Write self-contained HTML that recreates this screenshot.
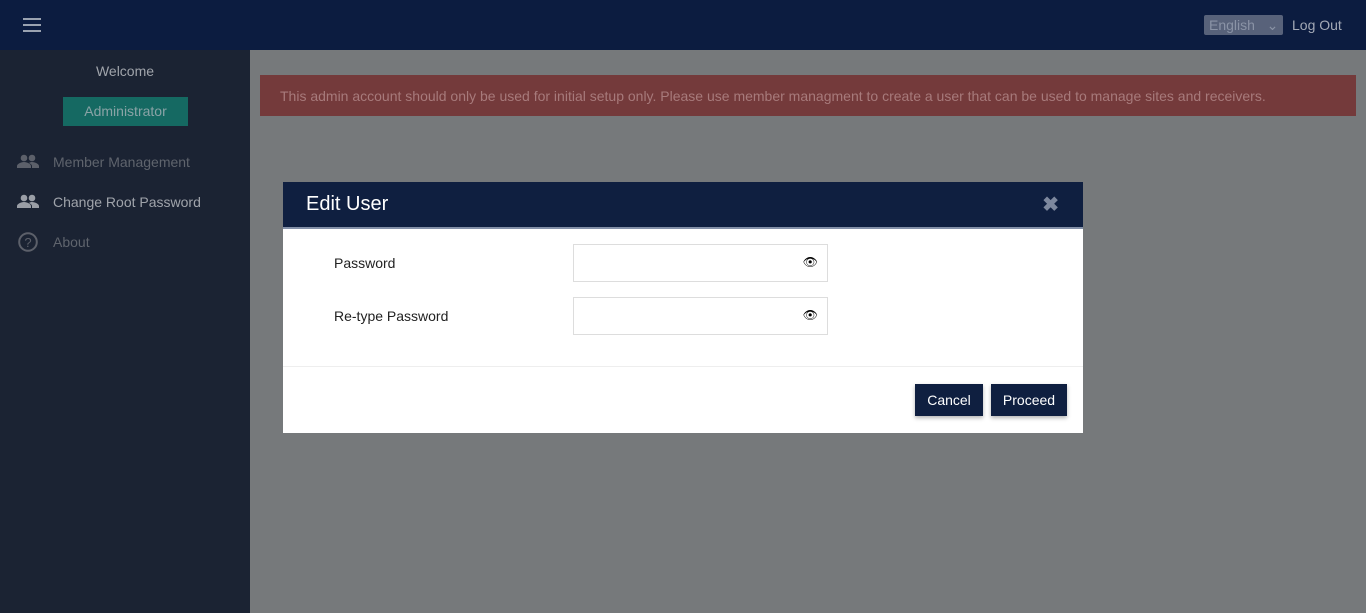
<!DOCTYPE html>
<html><head><style>
*{box-sizing:border-box;margin:0;padding:0}
body{width:1366px;height:613px;overflow:hidden;background:#76797b;font-family:"Liberation Sans",sans-serif;position:relative}
.top{position:absolute;left:0;top:0;width:1366px;height:50px;background:#0c1c40}
.ham{position:absolute;left:23px;top:18px;width:18px}
.ham i{display:block;height:2px;background:#9aa2b0;margin-bottom:4px}
.sel{position:absolute;left:1204px;top:15px;width:79px;height:20px;background:#58627a;border-radius:2px;color:#8a93a6;font-size:14px;padding:2px 0 0 5px}
.lo{position:absolute;left:1292px;top:17px;color:#a3a9b6;font-size:14px}
.side{position:absolute;left:0;top:50px;width:250px;height:563px;background:#1b2333}
.wel{position:absolute;left:0;width:250px;top:13px;text-align:center;color:#a0a4ab;font-size:14px}
.adm{position:absolute;left:63px;top:47px;width:125px;height:29px;background:#156962;color:#8aa3a6;font-size:14px;text-align:center;line-height:29px}
.it{position:absolute;left:53px;font-size:14px}
.alert{position:absolute;left:260px;top:75px;width:1096px;height:41px;background:#743a3b;color:#a77a7b;font-size:14px;padding:13px 20px}
.modal{position:absolute;left:283px;top:182px;width:800px;height:251px;background:#fff}
.mh{height:47px;background:#0f1f40;border-bottom:2px solid #8390a8;color:#fff;font-size:20px;padding:11px 23px}
.x{position:absolute;right:24px;top:10px;color:#7d889e;font-size:20px;font-weight:bold}
.lbl{position:absolute;left:51px;font-size:14px;color:#222}
.inp{position:absolute;left:290px;width:255px;height:38px;border:1px solid #ddd}
.eye{position:absolute;right:9px;top:10px;font-size:12px}
.ft{position:absolute;left:0;top:184px;width:800px;border-top:1px solid #eee}
.btn{position:absolute;top:202px;height:32px;background:#0f1f40;color:#fff;font-size:14px;line-height:32px;text-align:center;box-shadow:0 2px 4px rgba(0,0,0,.3)}
</style></head><body>
<div class="top"><div class="ham"><i></i><i></i><i></i></div><div class="sel">English&nbsp;&nbsp;&nbsp;⌄</div><div class="lo">Log Out</div></div>
<div class="side">
<div class="wel">Welcome</div>
<div class="adm">Administrator</div>
<svg style="position:absolute;left:17px;top:104px" width="22" height="14" viewBox="0 0 22 14"><g fill="#5c606a"><circle cx="7" cy="4" r="3.3"/><circle cx="15" cy="4" r="3.3"/><path d="M0 14v-2c0-2 4-4 7-4s7 2 7 4v2zM12 9c1-.8 2-1 3-1 3 0 7 2 7 4v2h-7v-2c0-1-1-2-3-3z"/></g></svg>
<div class="it" style="top:104px;color:#5f646d">Member Management</div>
<svg style="position:absolute;left:17px;top:144px" width="22" height="14" viewBox="0 0 22 14"><g fill="#9a9ea6"><circle cx="7" cy="4" r="3.3"/><circle cx="15" cy="4" r="3.3"/><path d="M0 14v-2c0-2 4-4 7-4s7 2 7 4v2zM12 9c1-.8 2-1 3-1 3 0 7 2 7 4v2h-7v-2c0-1-1-2-3-3z"/></g></svg>
<div class="it" style="top:144px;color:#a0a4ab">Change Root Password</div>
<svg style="position:absolute;left:18px;top:182px" width="20" height="20" viewBox="0 0 20 20"><circle cx="10" cy="10" r="8.8" fill="none" stroke="#5c606a" stroke-width="2"/><text x="10" y="15" text-anchor="middle" font-size="13" font-family="Liberation Sans" fill="#5c606a">?</text></svg>
<div class="it" style="top:184px;color:#5f646d">About</div>
</div>
<div class="alert">This admin account should only be used for initial setup only. Please use member managment to create a user that can be used to manage sites and receivers.</div>
<div class="modal">
<div class="mh">Edit User</div><div class="x">✖</div>
<div class="lbl" style="top:73px">Password</div>
<div class="inp" style="top:62px"><span class="eye">👁</span></div>
<div class="lbl" style="top:126px">Re-type Password</div>
<div class="inp" style="top:115px"><span class="eye">👁</span></div>
<div class="ft"></div>
<div class="btn" style="left:632px;width:68px">Cancel</div>
<div class="btn" style="left:708px;width:76px">Proceed</div>
</div>
</body></html>
